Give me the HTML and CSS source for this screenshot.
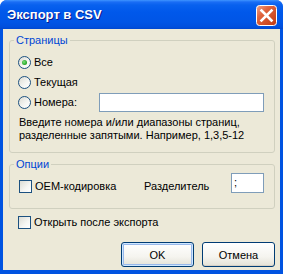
FILE: index.html
```html
<!DOCTYPE html>
<html lang="ru">
<head>
    <meta charset="UTF-8">
    <title>Экспорт в CSV</title>
    <link rel="stylesheet" href="styles.css">
</head>
<body>
    <div class="window">
        <div class="titlebar">
            <span class="title">Экспорт в CSV</span>
            <span class="close">
                <svg width="21" height="21" viewBox="0 0 21 21">
                    <defs>
                        <linearGradient id="cg" x1="0" y1="0" x2="1" y2="1">
                            <stop offset="0" stop-color="#F0A48A"/>
                            <stop offset="0.35" stop-color="#E0643E"/>
                            <stop offset="1" stop-color="#C1380F"/>
                        </linearGradient>
                    </defs>
                    <rect x="0.5" y="0.5" width="20" height="20" rx="3" fill="url(#cg)" stroke="#fff"/>
                    <path d="M5.5 5.5 L15.5 15.5 M15.5 5.5 L5.5 15.5" stroke="#fff" stroke-width="2.6" stroke-linecap="square"/>
                </svg>
            </span>
        </div>
        <div class="client">
            <fieldset class="group">
                <legend>Страницы</legend>
                <div class="group-body pages">
                    <div class="row">
                        <label class="option"><span class="radio checked"></span>Все</label>
                    </div>
                    <div class="row">
                        <label class="option"><span class="radio"></span>Текущая</label>
                    </div>
                    <div class="row">
                        <label class="option"><span class="radio"></span>Номера:</label>
                        <span class="textbox wide"></span>
                    </div>
                    <p class="hint">Введите номера и/или диапазоны страниц,<br>разделенные запятыми. Например, 1,3,5-12</p>
                </div>
            </fieldset>

            <fieldset class="group">
                <legend>Опции</legend>
                <div class="group-body options">
                    <label class="option oem"><span class="check"></span>OEM-кодировка</label>
                    <span class="sep-label">Разделитель</span>
                    <span class="textbox narrow">;</span>
                </div>
            </fieldset>

            <div class="open-after">
                <label class="option"><span class="check"></span>Открыть после экспорта</label>
            </div>

            <div class="buttons">
                <span class="button default">OK</span>
                <span class="button">Отмена</span>
            </div>
        </div>
    </div>
</body>
</html>
```

FILE: styles.css
```css
body {
    margin: 0;
    background: #fff;
    font-family: "Liberation Sans", Arial, sans-serif;
    font-size: 11px;
    color: #000;
}
.window {
    width: 283px;
    height: 274px;
    display: flex;
    flex-direction: column;
    background: #0053E1;
    border-radius: 7px 7px 0 0;
    overflow: hidden;
}
.titlebar {
    height: 29px;
    flex: none;
    display: flex;
    align-items: center;
    justify-content: space-between;
    padding: 0 6px 0 7px;
    background: linear-gradient(#3F94FF 0, #1A6DF5 2px, #0861EE 5px, #0058EB 12px, #0055E6 22px, #004FDD 27px, #0047CF 29px);
}
.title {
    color: #fff;
    font-weight: bold;
    font-size: 13px;
    text-shadow: 1px 1px 0 #0A1A8E;
}
.close {
    display: flex;
    margin-top: 1px;
}
.client {
    flex: 1;
    margin: 0 3px 4px 3px;
    padding: 5px 5px 3px 6px;
    background: #ECE9D8;
    display: flex;
    flex-direction: column;
}
.group {
    margin: 0;
    padding: 0;
    border: 1px solid #D0D0BF;
    border-radius: 3px;
}
.group + .group {
    margin-top: 5px;
}
.group legend {
    margin-left: 4px;
    padding: 0 2px;
    line-height: 13px;
    color: #0046D5;
}
.group-body {
    padding: 5px 10px 10px 8px;
}
.row {
    height: 20px;
    display: flex;
    align-items: center;
}
.option {
    display: flex;
    align-items: center;
    gap: 3px;
    line-height: 13px;
}
.radio {
    width: 11px;
    height: 11px;
    border: 1px solid #1C5180;
    border-radius: 50%;
    background: linear-gradient(135deg, #DCDCD4, #F6F6F3 60%, #fff);
    position: relative;
}
.radio.checked::after {
    content: "";
    position: absolute;
    left: 3px;
    top: 3px;
    width: 5px;
    height: 5px;
    border-radius: 50%;
    background: radial-gradient(circle at 40% 40%, #7BE27B, #21A121 70%);
}
.check {
    width: 11px;
    height: 11px;
    margin-left: 1px;
    border: 1px solid #1C5180;
    background: linear-gradient(135deg, #DCDCD4, #F6F6F3 60%, #fff);
}
.textbox {
    box-sizing: border-box;
    border: 1px solid #7F9DB9;
    background: #fff;
    line-height: 16px;
    padding-left: 2px;
}
.textbox.wide {
    width: 165px;
    height: 19px;
    margin-left: auto;
}
.hint {
    margin: 4px 0 0 1px;
    line-height: 13px;
}
.options {
    display: flex;
    align-items: flex-end;
    padding: 2px 10px 15px 8px;
}
.oem {
    flex: none;
    width: 126px;
}
.sep-label {
    line-height: 13px;
}
.textbox.narrow {
    width: 33px;
    height: 20px;
    margin-left: auto;
}
.open-after {
    padding: 7px 0 0 8px;
}
.buttons {
    margin-top: auto;
    display: flex;
    justify-content: flex-end;
    gap: 8px;
}
.button {
    box-sizing: border-box;
    width: 73px;
    height: 25px;
    display: flex;
    align-items: center;
    justify-content: center;
    border: 1px solid #003C74;
    border-radius: 3px;
    background: linear-gradient(#FFFFFF, #F5F4EF 60%, #E3E1D6);
    box-shadow: inset 0 -1px 0 #D6D0C5;
}
.button.default {
    box-shadow: inset 0 0 0 1px #CEE7FF, inset 0 0 0 2px #98B8EA;
}
```
